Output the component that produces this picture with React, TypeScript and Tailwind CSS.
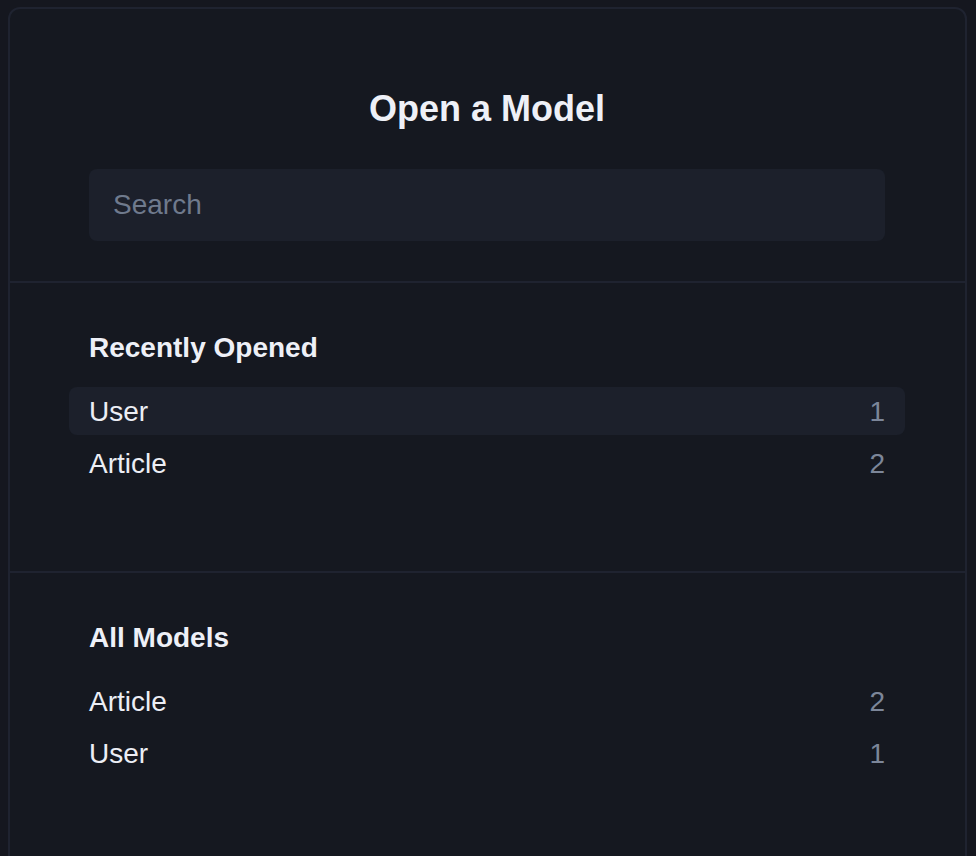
import { useState } from "react";

const recent = [
  { name: "User", count: 1 },
  { name: "Article", count: 2 },
];

const allModels = [
  { name: "Article", count: 2 },
  { name: "User", count: 1 },
];

function ModelRow({
  name,
  count,
  active,
}: {
  name: string;
  count: number;
  active?: boolean;
}) {
  return (
    <div
      className={`-mx-[20px] flex h-[48px] items-center justify-between rounded-[8px] px-[20px] pt-[2px] ${
        active ? "bg-[#1c202b]" : ""
      }`}
    >
      <span className="text-[28px] leading-[40px] text-[#eceef5]">{name}</span>
      <span className="text-[28px] leading-[40px] text-[#7c8699]">{count}</span>
    </div>
  );
}

function Section({
  title,
  items,
  activeIndex,
}: {
  title: string;
  items: { name: string; count: number }[];
  activeIndex?: number;
}) {
  return (
    <div className="pl-[79px] pr-[80px] pt-[45px] pb-[84px]">
      <h3 className="text-[28px] font-bold leading-[40px] text-[#eef0f7]">
        {title}
      </h3>
      <div className="mt-[19px] flex flex-col gap-[4px]">
        {items.map((item, i) => (
          <ModelRow
            key={item.name}
            name={item.name}
            count={item.count}
            active={i === activeIndex}
          />
        ))}
      </div>
    </div>
  );
}

export default function App() {
  const [query, setQuery] = useState("");

  return (
    <div
      className="min-h-[856px] overflow-hidden bg-[#15171f] pt-[7px]"
      style={{ fontFamily: '"Liberation Sans", Arial, sans-serif' }}
    >
      <div className="ml-[8px] h-[870px] w-[959px] rounded-[12px] border-2 border-[#1f2330] bg-[#151820]">
        {/* Header */}
        <div className="border-b-2 border-[#1f2330] pl-[79px] pr-[80px] pt-[80px] pb-[40px]">
          <h1 className="text-center text-[36px] font-bold leading-[40px] text-[#eef0f7]">
            Open a Model
          </h1>
          <input
            value={query}
            onChange={(e) => setQuery(e.target.value)}
            placeholder="Search"
            className="mt-[40px] h-[72px] w-full rounded-[8px] bg-[#1c202b] px-[24px] text-[28px] text-[#eceef5] outline-none placeholder:text-[#6f7a8d]"
          />
        </div>

        <div className="border-b-2 border-[#1f2330]">
          <Section title="Recently Opened" items={recent} activeIndex={0} />
        </div>

        <Section title="All Models" items={allModels} />
      </div>
    </div>
  );
}
